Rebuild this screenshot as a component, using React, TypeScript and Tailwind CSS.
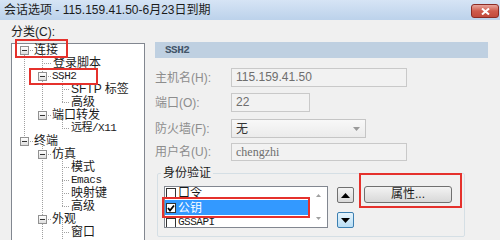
import type { ReactNode } from "react";

type Node = { level: 0 | 1 | 2; text: string; exp?: boolean; mono?: boolean };

const tree: Node[] = [
  { level: 0, text: "连接", exp: true },
  { level: 1, text: "登录脚本" },
  { level: 1, text: "SSH2", exp: true, mono: true },
  { level: 2, text: "SFTP 标签" },
  { level: 2, text: "高级" },
  { level: 1, text: "端口转发", exp: true },
  { level: 2, text: "远程/X11", mono: true },
  { level: 0, text: "终端", exp: true },
  { level: 1, text: "仿真", exp: true },
  { level: 2, text: "模式" },
  { level: 2, text: "Emacs", mono: true },
  { level: 2, text: "映射键" },
  { level: 2, text: "高级" },
  { level: 1, text: "外观", exp: true },
  { level: 2, text: "窗口" },
];

const leafPad = ["pl-[22px]", "pl-[40px]", "pl-[58px]"];
const expPad = ["pl-[8px]", "pl-[26px]", "pl-[44px]"];

const cy = (i: number) => 6.5 + i * 13;

// dotted connector lines of the tree
const TreeLines = () => {
  const v = (x: number, a: number, b: number) => (
    <line key={`v${x}-${a}`} x1={x + 0.5} x2={x + 0.5} y1={a} y2={b} />
  );
  const h = (x1: number, x2: number, i: number) => (
    <line key={`h${x1}-${i}`} x1={x1} x2={x2} y1={Math.floor(cy(i)) + 0.5} y2={Math.floor(cy(i)) + 0.5} />
  );
  return (
    <svg className="absolute left-0 top-0" width="132" height="200" stroke="#a0a0a0" strokeWidth="1" strokeDasharray="1 1" shapeRendering="crispEdges">
      {v(12, cy(0), cy(7))}
      {h(12, 21, 0)}
      {h(12, 21, 7)}
      {v(30, cy(0), cy(5))}
      {v(30, cy(7), 200)}
      {[1, 2, 5, 8, 13].map((i) => h(30, 39, i))}
      {v(50, cy(2), cy(4))}
      {v(50, cy(5), cy(6))}
      {v(50, cy(8), cy(12))}
      {v(50, cy(13), 200)}
      {[3, 4, 6, 9, 10, 11, 12, 14].map((i) => h(50, 57, i))}
    </svg>
  );
};

const Expander = () => (
  <span className="relative w-[9px] h-[9px] border border-[#919191] bg-gradient-to-b from-white to-[#dedede] flex items-center justify-center shrink-0">
    <span className="w-[5px] h-[1px] bg-[#333]" />
  </span>
);

const Field = ({ label, children }: { label: string; children: ReactNode }) => (
  <div className="flex items-center">
    <span className="w-[76px] text-[12px] text-[#8d8d8d]">{label}</span>
    {children}
  </div>
);

const Check = ({ on }: { on?: boolean }) => (
  <span className="w-[10px] h-[10px] border border-[#333] bg-white flex items-center justify-center shrink-0">
    {on && (
      <svg width="8" height="8" viewBox="0 0 8 8">
        <path d="M1 4 L3 6.5 L7 1.5" fill="none" stroke="#000" strokeWidth="1.8" />
      </svg>
    )}
  </span>
);

const Red = ({ className }: { className: string }) => (
  <div className={`absolute border-2 border-[#e5312c] pointer-events-none ${className}`} />
);

export default function App() {
  return (
    <div className="relative w-[500px] h-[240px] overflow-hidden bg-[#f0f0f0] text-[#1b1b1b] font-['Liberation_Sans','Noto_Sans_CJK_SC',sans-serif]">
      {/* title bar */}
      <div className="h-[20px] flex items-start justify-between pl-[4px] pr-[1px] bg-gradient-to-b from-[#d6e4f5] to-[#bcd2eb]">
        <span className="text-[12px] leading-[20px]">会话选项 - 115.159.41.50-6月23日到期</span>
        <button className="mt-[4px] w-[28px] h-[14px] rounded-[3px] border border-[#8c2b24] bg-gradient-to-b from-[#e6a59c] via-[#cf5a4c] to-[#c24a3c] flex items-center justify-center">
          <svg width="9" height="7" viewBox="0 0 9 7">
            <path d="M1 0.5 L8 6.5 M8 0.5 L1 6.5" stroke="#fff" strokeWidth="2" />
          </svg>
        </button>
      </div>

      <div className="flex">
        {/* category tree */}
        <div className="w-[144px] pl-[11px] pt-[4px]">
          <div className="h-[17px] leading-[17px] text-[12px] pl-[-1px]">分类(C):</div>
          <div className="relative mt-[2px] w-[134px] h-[200px] border border-[#828790] bg-white">
            <TreeLines />
            <div className="relative">
              {tree.map((n, i) => (
                <div key={i} className={`h-[13px] flex items-center text-[12px] leading-[13px] ${n.exp ? expPad[n.level] : leafPad[n.level]}`}>
                  {n.exp && <Expander />}
                  <span className={`${n.exp ? "ml-[4px]" : ""} px-[1px] ${n.mono ? "font-['Liberation_Mono','Noto_Sans_CJK_SC',monospace] text-[11px] tracking-[-0.5px]" : ""}`}>
                    {n.text}
                  </span>
                </div>
              ))}
            </div>
          </div>
        </div>

        {/* right panel */}
        <div className="ml-[11px] w-[333px] pt-[22px]">
          <div className="h-[16px] bg-[#bfd0e1] pl-[10px] flex items-center text-[11px] font-bold text-[#44566a] font-['Liberation_Mono',monospace] tracking-[-0.5px]">
            SSH2
          </div>

          <div className="mt-[10px]">
            <Field label="主机名(H):">
              <div className="w-[176px] h-[19px] border border-[#c9c9c9] bg-[#f2f2f2] pl-[4px] text-[12px] leading-[17px] text-[#6e6e6e]">
                115.159.41.50
              </div>
            </Field>
          </div>
          <div className="mt-[6px]">
            <Field label="端口(O):">
              <div className="w-[79px] h-[19px] border border-[#c9c9c9] bg-[#f2f2f2] pl-[4px] text-[12px] leading-[17px] text-[#6e6e6e]">22</div>
            </Field>
          </div>
          <div className="mt-[7px]">
            <Field label="防火墙(F):">
              <div className="w-[135px] h-[19px] border border-[#c5c5c5] bg-gradient-to-b from-[#f8f8f8] to-[#ebebeb] pl-[4px] pr-[5px] flex items-center justify-between text-[12px] text-[#333]">
                <span>无</span>
                <svg width="7" height="4" viewBox="0 0 7 4">
                  <path d="M0 0 H7 L3.5 4 Z" fill="#9a9a9a" />
                </svg>
              </div>
            </Field>
          </div>
          <div className="mt-[5px]">
            <Field label="用户名(U):">
              <div className="w-[176px] h-[18px] border border-[#c9c9c9] bg-[#f2f2f2] pl-[4px] text-[12px] leading-[16px] text-[#6e6e6e] font-['Liberation_Serif',serif]">
                chengzhi
              </div>
            </Field>
          </div>

          {/* auth group */}
          <fieldset className="mt-[4px] ml-[2px] w-[308px] border border-[#d5dfe5] rounded-[2px] pb-[8px]">
            <legend className="ml-[3px] px-[2px] text-[12px] leading-[16px] text-[#1b1b1b]">身份验证</legend>
            <div className="flex items-start mt-[5px]">
              <div className="ml-[6px] w-[164px] h-[42px] border border-[#828790] bg-white flex overflow-hidden">
                <div className="w-[145px] -mt-[2px] text-[12px]">
                  <div className="h-[15px] flex items-center pl-[1px] gap-[2px]">
                    <Check />
                    <span>口令</span>
                  </div>
                  <div className="h-[15px] flex items-center pl-[1px] gap-[2px] bg-[#3399ff] text-white">
                    <Check on />
                    <span>公钥</span>
                  </div>
                  <div className="h-[15px] flex items-center pl-[1px] gap-[2px]">
                    <Check />
                    <span className="text-[11px] font-['Liberation_Mono',monospace] tracking-[-0.5px]">GSSAPI</span>
                  </div>
                </div>
                <div className="w-[17px] flex flex-col items-center justify-between py-[7px]">
                  <svg width="5" height="3" viewBox="0 0 5 3"><path d="M0 3 L2.5 0 L5 3 Z" fill="#a0a0a0" /></svg>
                  <svg width="5" height="3" viewBox="0 0 5 3"><path d="M0 0 L2.5 3 L5 0 Z" fill="#a0a0a0" /></svg>
                </div>
              </div>
              <div className="ml-[9px] mt-[1px] flex flex-col gap-[9px]">
                <button className="w-[17px] h-[16px] rounded-[2px] border border-[#707070] bg-gradient-to-b from-[#f4f4f4] to-[#d9d9d9] flex items-center justify-center">
                  <svg width="9" height="5" viewBox="0 0 9 5"><path d="M0 5 L4.5 0 L9 5 Z" fill="#000" /></svg>
                </button>
                <button className="w-[17px] h-[16px] rounded-[2px] border border-[#3c7fb1] bg-gradient-to-b from-[#e5f4fc] to-[#b9def5] flex items-center justify-center">
                  <svg width="9" height="5" viewBox="0 0 9 5"><path d="M0 0 L4.5 5 L9 0 Z" fill="#000" /></svg>
                </button>
              </div>
              <button className="ml-[10px] w-[88px] h-[17px] rounded-[3px] border border-[#707070] bg-gradient-to-b from-[#f3f3f3] to-[#d8d8d8] text-[12px] leading-[15px] text-[#1b1b1b]">
                属性...
              </button>
            </div>
          </fieldset>
        </div>
      </div>

      {/* red annotation frames */}
      <Red className="left-[15px] top-[39px] w-[53px] h-[19px]" />
      <Red className="left-[29px] top-[68px] w-[69px] h-[17px]" />
      <Red className="left-[162px] top-[197px] w-[148px] h-[21px]" />
      <Red className="left-[359px] top-[173px] w-[103px] h-[35px]" />
    </div>
  );
}
